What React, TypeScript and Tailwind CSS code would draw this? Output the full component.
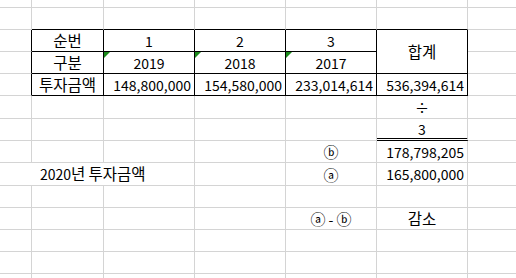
import React from 'react';

type Cell = {
  t?: string;
  span?: number;
  rowSpan?: number;
  align?: 'c' | 'r' | 'l';
  tri?: boolean;
  dbl?: boolean;
};

// rows of the sheet, column A..G; a null slot is covered by a merged cell
const sheet: (Cell | null)[][] = [
  [{}, {}, {}, {}, {}, {}, {}],
  [{}, {}, {}, {}, {}, {}, {}],
  [{}, { t: '순번' }, { t: '1' }, { t: '2' }, { t: '3' }, { t: '합계', rowSpan: 2 }, {}],
  [{}, { t: '구분' }, { t: '2019', tri: true }, { t: '2018', tri: true }, { t: '2017', tri: true }, null, {}],
  [
    {},
    { t: '투자금액' },
    { t: '148,800,000', align: 'r' },
    { t: '154,580,000', align: 'r' },
    { t: '233,014,614', align: 'r' },
    { t: '536,394,614', align: 'r' },
    {},
  ],
  [{}, {}, {}, {}, {}, { t: '÷' }, {}],
  [{}, {}, {}, {}, {}, { t: '3', dbl: true }, {}],
  [{}, {}, {}, {}, { t: 'ⓑ' }, { t: '178,798,205', align: 'r' }, {}],
  [{ t: '2020년 투자금액', span: 3, align: 'l' }, null, null, {}, { t: 'ⓐ' }, { t: '165,800,000', align: 'r' }, {}],
  [{}, {}, {}, {}, {}, {}, {}],
  [{}, {}, {}, {}, { t: 'ⓐ - ⓑ' }, { t: '감소' }, {}],
  [{}, {}, {}, {}, {}, {}, {}],
  [{}, {}, {}, {}, {}, {}, {}],
  [{}, {}, {}, {}, {}, {}, {}],
];

const inTable = (r: number, c: number) => r >= 2 && r <= 4 && c >= 1 && c <= 5;

// hangul and circled letters sit a bit larger than the digits, like Malgun Gothic
function Runs({ text }: { text: string }) {
  const parts = text.split(/([가-힣]+|[ⓐⓑ])/).filter(Boolean);
  return (
    <>
      {parts.map((p, i) =>
        /[가-힣]/.test(p) ? (
          <span key={i} className="text-[15.5px]">
            {p}
          </span>
        ) : /[ⓐⓑ]/.test(p) ? (
          <span key={i} className="text-[15px]">
            {p}
          </span>
        ) : (
          <span key={i} className="whitespace-pre">
            {p}
          </span>
        ),
      )}
    </>
  );
}

function SheetCell({ cell, r, c }: { cell: Cell; r: number; c: number }) {
  const lastCol = c + (cell.span ?? 1) - 1;
  const lastRow = r + (cell.rowSpan ?? 1) - 1;
  const rightBlack = inTable(r, lastCol) || inTable(r, lastCol + 1);
  const bottomBlack = inTable(lastRow, c) || inTable(lastRow + 1, c);

  return (
    <div
      className={`relative flex items-center whitespace-nowrap border-r border-b ${
        rightBlack ? 'border-r-black' : 'border-r-[#d4d4d4]'
      } ${
        cell.dbl
          ? 'border-b-[3px] border-double border-b-black'
          : bottomBlack
            ? 'border-b-black'
            : 'border-b-[#d4d4d4]'
      } ${
        cell.align === 'r'
          ? 'justify-end pr-[3px]'
          : cell.align === 'l'
            ? 'justify-start pl-[40px]'
            : 'justify-center'
      } ${cell.span === 3 ? 'col-span-3' : ''} ${cell.rowSpan === 2 ? 'row-span-2' : ''}`}
    >
      {cell.tri && (
        <span className="absolute left-0 top-0 h-0 w-0 border-t-[6px] border-r-[6px] border-t-[#1b8a1b] border-r-transparent" />
      )}
      {cell.t && (
        <span className="leading-none">
          <Runs text={cell.t} />
        </span>
      )}
    </div>
  );
}

export default function App() {
  return (
    <div className="h-[278px] w-[516px] overflow-hidden bg-white font-['Noto_Sans_CJK_KR','Noto_Sans',sans-serif] text-[14px] text-black">
      <div className="grid grid-cols-[32px_72px_91px_91px_91px_91px_91px] grid-rows-[8px_22px_22px_22px_22px_23px_22px_22px_23px_22px_22px_22px_22px_22px]">
        {sheet.map((row, r) =>
          row.map((cell, c) => (cell ? <SheetCell key={`${r}-${c}`} cell={cell} r={r} c={c} /> : null)),
        )}
      </div>
    </div>
  );
}
